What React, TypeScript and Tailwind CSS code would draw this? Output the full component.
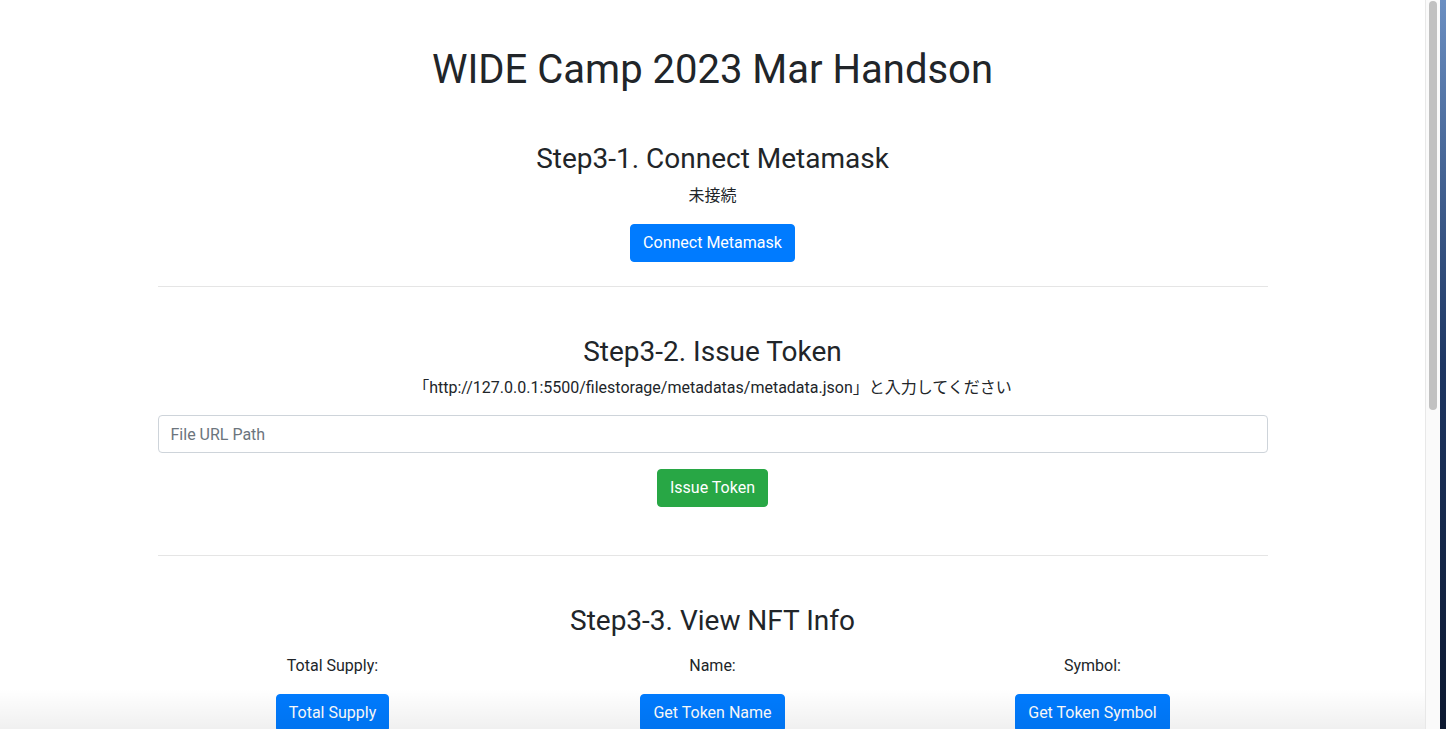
import { ChangeEvent, useState } from "react";

const FONT = "font-['Roboto','Noto_Sans_CJK_JP',sans-serif]";

function Heading({ title }: { title: string }) {
  return <h3 className="text-[28px] leading-[1.2] font-normal mb-2">{title}</h3>;
}

function Btn({ color, children }: { color: "blue" | "green"; children: React.ReactNode }) {
  const bg = color === "blue" ? "bg-[#007bff] border-[#007bff]" : "bg-[#28a745] border-[#28a745]";
  return (
    <button type="button" className={`${bg} text-white text-base leading-6 px-3 py-[6px] border rounded`}>
      {children}
    </button>
  );
}

export default function App() {
  const [path, setPath] = useState("");

  const handleChange = (event: ChangeEvent<HTMLInputElement>) => {
    setPath(event.target.value);
  };

  return (
    <div className={`flex h-[729px] w-[1446px] overflow-hidden bg-white text-[#212529] ${FONT}`}>
      <main className="relative flex-1 overflow-hidden">
        <div className="mx-auto w-[1140px] px-[15px] text-center">
          <h1 className="mt-[46px] mb-12 text-[40px] leading-[1.2] font-normal">WIDE Camp 2023 Mar Handson</h1>

          <Heading title="Step3-1. Connect Metamask" />
          <p className="mb-4 leading-6">未接続</p>
          <Btn color="blue">Connect Metamask</Btn>

          <hr className="mt-6 mb-12 border-t border-black/10" />

          <Heading title="Step3-2. Issue Token" />
          <p className="mb-[15px] leading-6">「http://127.0.0.1:5500/filestorage/metadatas/metadata.json」と入力してください</p>
          <input
            type="text"
            value={path}
            onChange={handleChange}
            placeholder="File URL Path"
            className="block w-full h-[38px] px-3 text-base border border-[#ced4da] rounded placeholder:text-[#6c757d] outline-0"
          />
          <div className="mt-4">
            <Btn color="green">Issue Token</Btn>
          </div>

          <hr className="mt-12 mb-12 border-t border-black/10" />

          <Heading title="Step3-3. View NFT Info" />
          <div className="-mx-[15px] grid grid-cols-3 mt-4">
            <div>
              <p className="mb-4 leading-6">Total Supply:</p>
              <Btn color="blue">Total Supply</Btn>
            </div>
            <div>
              <p className="mb-4 leading-6">Name:</p>
              <Btn color="blue">Get Token Name</Btn>
            </div>
            <div>
              <p className="mb-4 leading-6">Symbol:</p>
              <Btn color="blue">Get Token Symbol</Btn>
            </div>
          </div>
        </div>
        <div className="pointer-events-none absolute inset-x-0 bottom-0 h-10 bg-gradient-to-b from-transparent to-black/[0.06]" />
      </main>

      <div className="w-[15px] shrink-0 border-l border-[#e8e8e8] bg-[#fafafa] pl-[3px] pt-px">
        <div className="h-[409px] w-2 rounded bg-[#c1c1c1]" />
      </div>
      <div className="w-[6px] shrink-0 bg-gradient-to-b from-[#6b8fc2] via-[#1e3763] to-[#0c1830]" />
    </div>
  );
}
